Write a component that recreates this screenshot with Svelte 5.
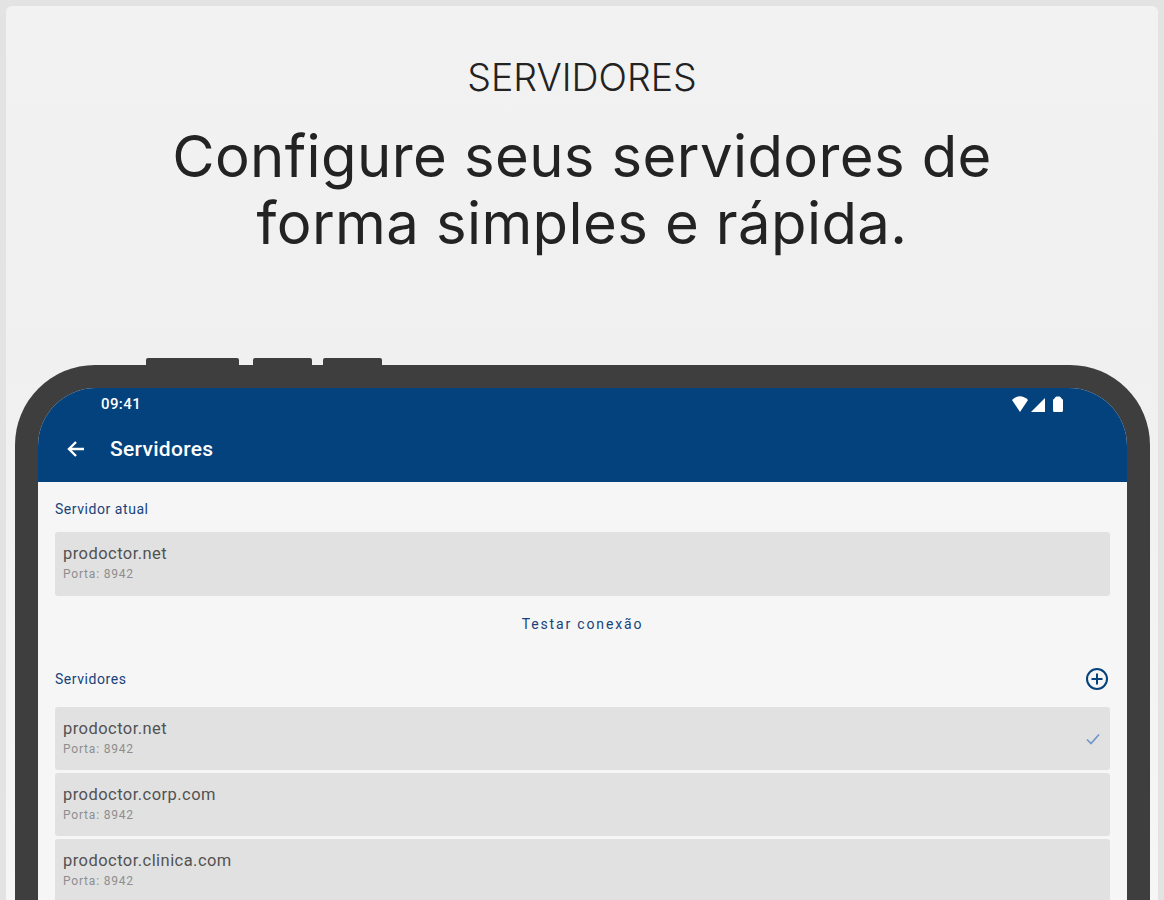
<script>
  const current = { name: "prodoctor.net", port: "Porta: 8942" };
  const servers = [
    { name: "prodoctor.net", port: "Porta: 8942", selected: true },
    { name: "prodoctor.corp.com", port: "Porta: 8942" },
    { name: "prodoctor.clinica.com", port: "Porta: 8942" },
  ];
</script>

<div class="page">
  <div class="card">
    <div class="eyebrow">SERVIDORES</div>
    <h1>Configure seus servidores de<br />forma simples e rápida.</h1>

    <div class="phone">
      <div class="buttons">
        <span class="btn b1"></span>
        <span class="btn b2"></span>
        <span class="btn b3"></span>
      </div>
      <div class="bezel">
        <div class="screen">
          <div class="appbar">
            <div class="status">
              <span class="time">09:41</span>
              <svg class="indicators" width="52" height="18" viewBox="0 0 52 18" fill="#fff">
                <path d="M0 5 C2.5 2.4 5.3 1.2 8 1.2 C10.7 1.2 13.5 2.4 16 5 L8 17 Z" />
                <path d="M19 17 L33 3 V17 Z" />
                <path d="M42.5 3.5 Q43 2 44.5 1.5 H47.5 Q49 2 49.5 3.5 Q51 4 51 5.5 V15.5 Q51 17 49.5 17 H42.5 Q41 17 41 15.5 V5.5 Q41 4 42.5 3.5 Z" />
              </svg>
            </div>
            <div class="toolbar">
              <svg width="20" height="20" viewBox="0 0 20 20" fill="none" stroke="#fff" stroke-width="2.4">
                <path d="M18 10 H3" />
                <path d="M10 3 L3 10 L10 17" />
              </svg>
              <span class="title">Servidores</span>
            </div>
          </div>

          <div class="content">
            <div class="label first">Servidor atual</div>
            <div class="item">
              <div class="name">{current.name}</div>
              <div class="port">{current.port}</div>
            </div>

            <div class="test">Testar conexão</div>

            <div class="label-row">
              <span class="label">Servidores</span>
              <svg width="24" height="24" viewBox="0 0 24 24" fill="none" stroke="#03427c" stroke-width="2">
                <circle cx="12" cy="12" r="10" />
                <path d="M12 6.5 V17.5 M6.5 12 H17.5" />
              </svg>
            </div>

            <div class="list">
              {#each servers as s}
                <div class="item">
                  <div class="name">{s.name}</div>
                  <div class="port">{s.port}</div>
                  {#if s.selected}
                    <svg class="check" width="16" height="14" viewBox="0 0 16 14" fill="none" stroke="#6f95c8" stroke-width="1.6">
                      <path d="M2 7.5 L6 11.5 L14 2.5" />
                    </svg>
                  {/if}
                </div>
              {/each}
            </div>
          </div>
        </div>
      </div>
    </div>
  </div>
</div>

<style>
  :global(html), :global(body) {
    margin: 0;
    height: 900px;
    overflow: hidden;
  }

  .page {
    height: 900px;
    box-sizing: border-box;
    padding: 6px 6px 0;
    background: #e3e3e3;
    overflow: hidden;
    font-family: Roboto, "Liberation Sans", sans-serif;
  }

  .card {
    height: 894px;
    box-sizing: border-box;
    padding: 52px 9px 0;
    border-radius: 6px 6px 0 0;
    background: linear-gradient(180deg, #f2f2f2 0%, #f0f0f0 40%, #f6f6f6 100%);
    overflow: hidden;
    text-align: center;
  }

  .eyebrow {
    font-family: Inter, sans-serif;
    font-weight: 300;
    font-size: 37.5px;
    line-height: 40px;
    color: #222;
  }

  h1 {
    margin: 25px 0 0;
    font-family: Inter, sans-serif;
    font-weight: 400;
    font-size: 58px;
    line-height: 67px;
    letter-spacing: 0.4px;
    color: #232323;
  }

  .phone {
    margin-top: 101px;
    text-align: left;
  }

  .buttons {
    display: flex;
    height: 7px;
    padding-left: 131px;
  }

  .btn {
    background: #3e3e3e;
    border-radius: 2px 2px 0 0;
  }
  .b1 { width: 93px; }
  .b2 { width: 59px; margin-left: 14px; }
  .b3 { width: 59px; margin-left: 11px; }

  .bezel {
    width: 1135px;
    height: 560px;
    box-sizing: border-box;
    padding: 23px 23px 0;
    background: #3e3e3e;
    border-radius: 80px 80px 0 0;
  }

  .screen {
    height: 537px;
    background: #f6f6f6;
    border-radius: 58px 58px 0 0;
    overflow: hidden;
  }

  .appbar {
    height: 94px;
    background: #03427c;
    color: #fff;
  }

  .status {
    display: flex;
    justify-content: space-between;
    align-items: center;
    height: 32px;
    padding: 0 63px;
  }

  .time {
    font-size: 15px;
    font-weight: 500;
    letter-spacing: 0.4px;
  }

  .indicators {
    margin-top: -1px;
  }

  .toolbar {
    display: flex;
    align-items: center;
    gap: 24px;
    height: 58px;
    padding-left: 28px;
  }

  .title {
    font-size: 21px;
    font-weight: 500;
    letter-spacing: 0.3px;
  }

  .content {
    padding: 0 17px;
  }

  .label {
    font-size: 14px;
    letter-spacing: 0.55px;
    color: #17437a;
  }

  .first {
    padding-top: 19px;
    line-height: 16px;
  }

  .item {
    position: relative;
    box-sizing: border-box;
    height: 63px;
    padding: 12px 8px 0;
    background: #e1e1e1;
    border-radius: 3px;
  }

  .content > .item {
    height: 64px;
    margin-top: 15px;
  }

  .name {
    font-size: 16.5px;
    line-height: 19px;
    letter-spacing: 0.45px;
    color: #525252;
  }

  .port {
    margin-top: 4px;
    font-size: 12px;
    line-height: 14px;
    letter-spacing: 0.8px;
    color: #8e8e8e;
  }

  .test {
    margin-top: 19px;
    text-align: center;
    font-size: 14px;
    line-height: 18px;
    font-weight: 400;
    letter-spacing: 1.85px;
    color: #17437a;
  }

  .label-row {
    display: flex;
    justify-content: space-between;
    align-items: center;
    margin-top: 34px;
    height: 24px;
    padding-right: 1px;
  }

  .list {
    display: flex;
    flex-direction: column;
    gap: 3px;
    margin-top: 16px;
  }

  .check {
    position: absolute;
    top: 25px;
    right: 9px;
  }
</style>
